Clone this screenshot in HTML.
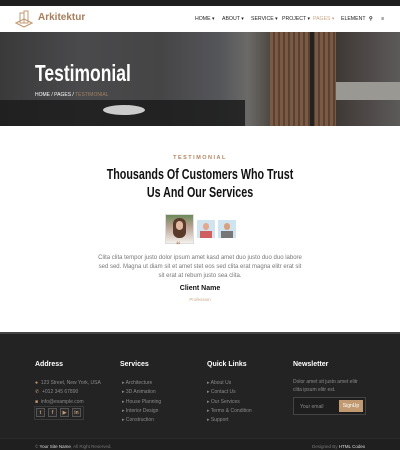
<!DOCTYPE html>
<html><head><style>
*{margin:0;padding:0;box-sizing:border-box}
body{width:400px;height:450px;overflow:hidden;font-family:"Liberation Sans",sans-serif;background:#fff;position:relative}
.a{position:absolute}
.cond{transform-origin:left center;font-weight:bold}
.nav span{position:absolute;top:16px;font-size:5.2px;color:#222}
.fh{font-size:7px;font-weight:bold;color:#fff;top:361px}
.fi{font-size:5px;color:#8a8a8a}
.so{width:9px;height:9px;border:1px solid #555;background:#2a2a2a;color:#c19a72;font-size:5px;text-align:center;line-height:8px;font-weight:bold}
</style></head><body>
<div class="a" style="left:0;top:0;width:400px;height:6px;background:#1e1e1e"></div>
<div class="a" style="left:0;top:6px;width:400px;height:26px;background:#fff"></div>
<svg class="a" style="left:14px;top:10px" width="20" height="18" viewBox="0 0 20 18"><path d="M2 13 L10 17 L18 13 L10 9 Z" fill="none" stroke="#c19a72" stroke-width="1.2"/><rect x="6" y="3" width="4" height="10" fill="none" stroke="#c19a72"/><rect x="10" y="1" width="4" height="12" fill="none" stroke="#c19a72"/></svg>
<div class="a" style="left:38px;top:12px;font-size:10px;font-weight:bold;color:#a87e5a">Arkitektur</div>
<div class="nav">
<span style="left:195px">HOME ▾</span><span style="left:222px">ABOUT ▾</span><span style="left:251px">SERVICE ▾</span><span style="left:282px">PROJECT ▾</span><span style="left:313px;color:#c9a987">PAGES ▾</span><span style="left:341px">ELEMENT</span><span style="left:369px;font-weight:bold">⚲</span><span style="left:381px;font-weight:bold">≡</span>
</div>
<div class="a" style="left:0;top:32px;width:400px;height:94px;background:linear-gradient(90deg,#3a3a3b 0%,#4a4a4c 20%,#454546 40%,#55565a 55%,#6b6a68 62%,#4d4640 68%,#6e5847 75%,#3b3531 82%,#4a4443 90%,#5c5b5a 100%)"></div>
<div class="a" style="left:0;top:100px;width:245px;height:26px;background:#1c1c1c;opacity:.85"></div>
<div class="a" style="left:270px;top:32px;width:66px;height:94px;background:repeating-linear-gradient(90deg,#7a5a44 0 3px,#5a4233 3px 5px)"></div>
<div class="a" style="left:310px;top:32px;width:4px;height:94px;background:#222"></div>
<div class="a" style="left:336px;top:82px;width:64px;height:18px;background:#9a9893"></div>
<div class="a" style="left:103px;top:105px;width:42px;height:10px;border-radius:50%;background:#ccc"></div>
<div class="a cond" style="left:35px;top:60px;font-size:23px;color:#fff;transform:scaleX(.76)">Testimonial</div>
<div class="a" style="left:35px;top:92px;font-size:5px;color:#fff">HOME / PAGES / <span style="color:#a08060">TESTIMONIAL</span></div>
<div class="a" style="left:0;top:155px;width:400px;text-align:center;font-size:5.5px;letter-spacing:1.5px;color:#b08560;font-weight:bold">TESTIMONIAL</div>
<div class="a" style="left:0;top:166px;width:400px;text-align:center;font-size:14.5px;font-weight:bold;color:#111;line-height:18px;transform:scaleX(.74)">Thousands Of Customers Who Trust<br>Us And Our Services</div>
<div class="a" style="left:165px;top:214px;width:29px;height:30px;background:linear-gradient(#6b8a5a,#b9a090 40%,#f4f0ec);border:1px solid #ddd"></div>
<div class="a" style="left:173px;top:218px;width:13px;height:20px;border-radius:6px;background:#5a3a2a"></div>
<div class="a" style="left:176px;top:221px;width:7px;height:9px;border-radius:4px;background:#e2b8a0"></div>
<div class="a" style="left:197px;top:220px;width:18px;height:18px;background:#cfe4ef"></div>
<div class="a" style="left:203px;top:223px;width:6px;height:7px;border-radius:3px;background:#e4a88e"></div>
<div class="a" style="left:200px;top:231px;width:12px;height:7px;background:#d06060"></div>
<div class="a" style="left:218px;top:220px;width:18px;height:18px;background:#cfe4ef"></div>
<div class="a" style="left:224px;top:223px;width:6px;height:7px;border-radius:3px;background:#d9a080"></div>
<div class="a" style="left:221px;top:231px;width:12px;height:7px;background:#777"></div>
<div class="a" style="left:176px;top:240px;font-size:9px;color:#b08560;font-weight:bold">“</div>
<div class="a" style="left:98px;top:254px;width:204px;text-align:center;font-size:6px;line-height:9px;color:#777">Clita clita tempor justo dolor ipsum amet kasd amet duo justo duo duo labore sed sed. Magna ut diam sit et amet stet eos sed clita erat magna elitr erat sit sit erat at rebum justo sea clita.</div>
<div class="a" style="left:0;top:285px;width:400px;text-align:center;font-size:7px;font-weight:bold;color:#111">Client Name</div>
<div class="a" style="left:0;top:297px;width:400px;text-align:center;font-size:4.5px;color:#c9a987">Profession</div>
<div class="a" style="left:0;top:332px;width:400px;height:118px;background:#232323;border-top:2px solid #444"></div>
<div class="a" style="left:0;top:438px;width:400px;height:12px;background:#1f1f1f;border-top:1px solid #2b2b2b"></div>
<div class="a fh" style="left:35px">Address</div>
<div class="a fh" style="left:120px">Services</div>
<div class="a fh" style="left:207px">Quick Links</div>
<div class="a fh" style="left:293px">Newsletter</div>
<div class="a fi" style="left:35px;top:379px;line-height:9.3px"><span style="color:#c19a72">●</span>&nbsp; 123 Street, New York, USA<br><span style="color:#c19a72">✆</span>&nbsp; +012 345 67890<br><span style="color:#c19a72">■</span>&nbsp; info@example.com</div>
<div class="a" style="left:34px;top:406px;width:50px;height:14px;border:1px solid #3a3a3a"></div>
<div class="a" style="left:36px;top:408px;display:flex;gap:3px"><div class="so">t</div><div class="so">f</div><div class="so">▶</div><div class="so">in</div></div>
<div class="a fi" style="left:122px;top:379px;line-height:9.3px">▸ Architecture<br>▸ 3D Animation<br>▸ House Planning<br>▸ Interior Design<br>▸ Construction</div>
<div class="a fi" style="left:207px;top:379px;line-height:9.3px">▸ About Us<br>▸ Contact Us<br>▸ Our Services<br>▸ Terms &amp; Condition<br>▸ Support</div>
<div class="a fi" style="left:293px;top:378px;line-height:8px">Dolor amet sit justo amet elitr<br>clita ipsum elitr est.</div>
<div class="a" style="left:293px;top:397px;width:73px;height:18px;border:1px solid #444;background:#1e1e1e"></div>
<div class="a fi" style="left:300px;top:404px">Your email</div>
<div class="a" style="left:339px;top:400px;width:24px;height:12px;background:#c19a72;font-size:5px;color:#fff;text-align:center;line-height:12px">SignUp</div>
<div class="a" style="left:35px;top:444px;font-size:4.5px;color:#777">© <span style="color:#ddd">Your Site Name</span>, All Right Reserved.</div>
<div class="a" style="left:312px;top:444px;font-size:4.5px;color:#777">Designed By <span style="color:#ddd">HTML Codex</span></div>
</body></html>
